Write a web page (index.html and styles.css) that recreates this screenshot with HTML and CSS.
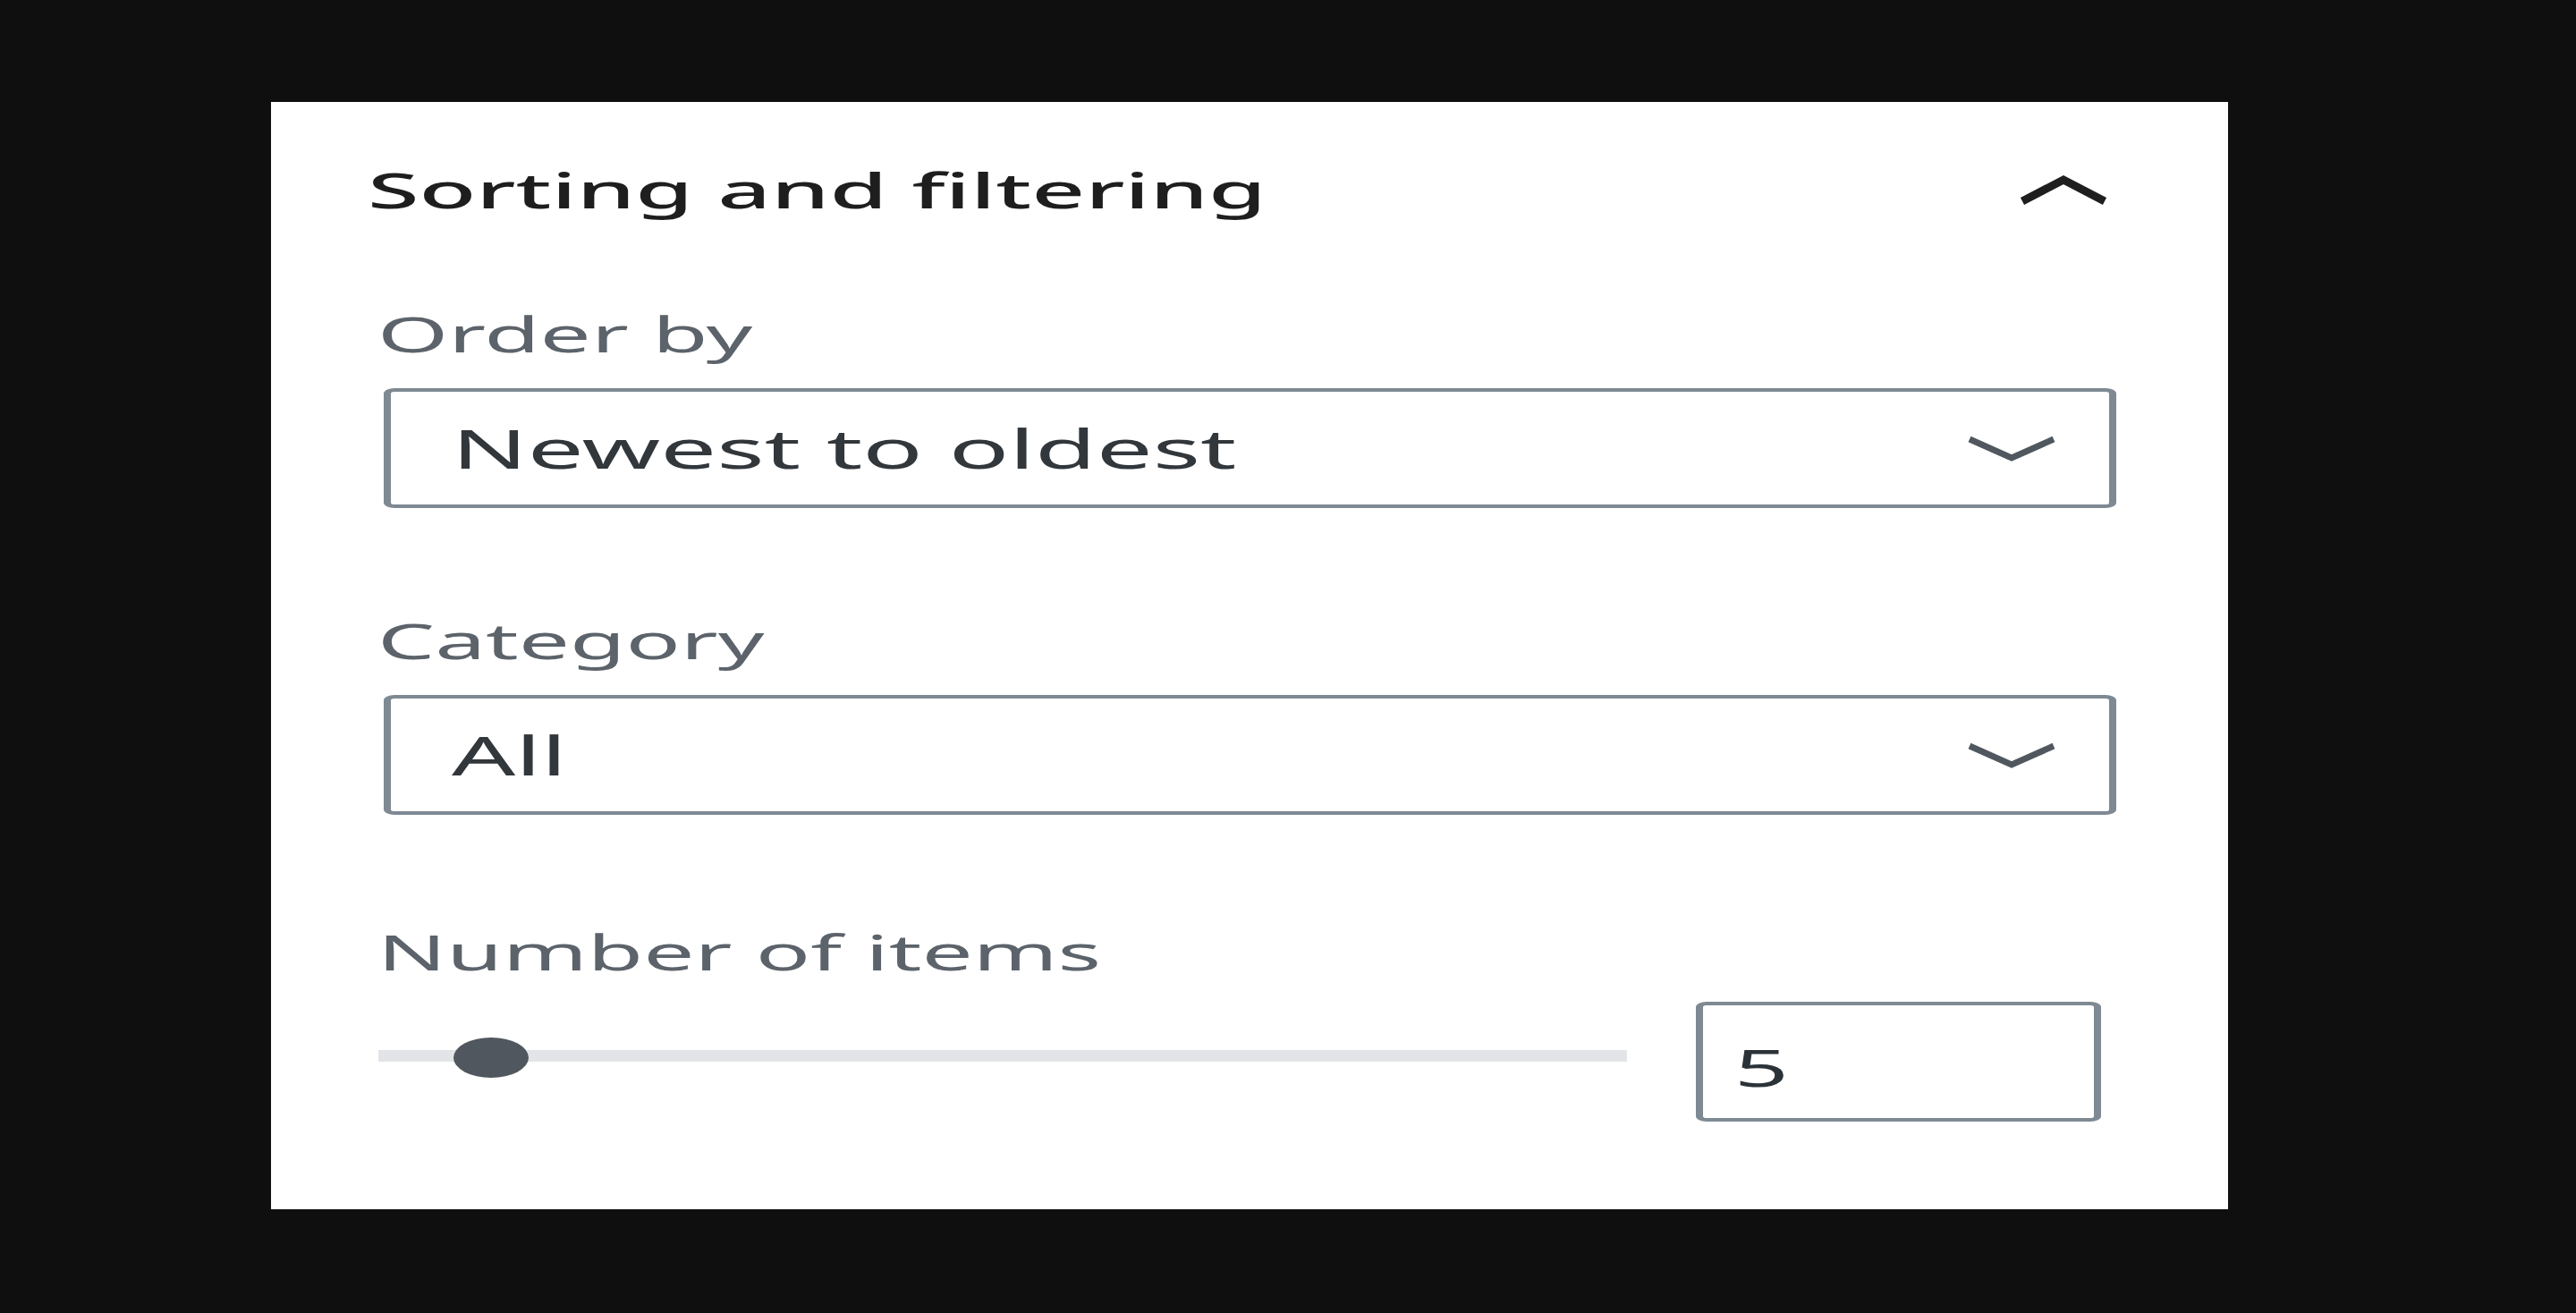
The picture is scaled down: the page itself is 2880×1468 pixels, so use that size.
FILE: index.html
```html
<!DOCTYPE html>
<html lang="en">
<head>
<meta charset="utf-8">
<title>Sorting and filtering</title>
<link rel="stylesheet" href="styles.css">
</head>
<body>
<section class="panel">
  <div class="panel-header">
    <h2 class="panel-title"><span class="stretch">Sorting and filtering</span></h2>
    <svg class="chevron-up" width="100" height="35" viewBox="0 0 100 35" aria-hidden="true">
      <polyline points="4,30 50,6 96,30" fill="none" stroke="#1e1e1e" stroke-width="9" stroke-linejoin="miter"/>
    </svg>
  </div>

  <div class="field field-first">
    <label class="field-label"><span class="stretch stretch-label">Order by</span></label>
    <div class="select">
      <span class="select-value"><span class="stretch stretch-value">Newest to oldest</span></span>
      <svg class="chevron-down" width="100" height="31" viewBox="0 0 100 31" aria-hidden="true">
        <polyline points="3,5 50,26 97,5" fill="none" stroke="#50575e" stroke-width="7"/>
      </svg>
    </div>
  </div>

  <div class="field">
    <label class="field-label"><span class="stretch stretch-label">Category</span></label>
    <div class="select">
      <span class="select-value"><span class="stretch stretch-value">All</span></span>
      <svg class="chevron-down" width="100" height="31" viewBox="0 0 100 31" aria-hidden="true">
        <polyline points="3,5 50,26 97,5" fill="none" stroke="#50575e" stroke-width="7"/>
      </svg>
    </div>
  </div>

  <div class="field field-last">
    <label class="field-label"><span class="stretch stretch-label">Number of items</span></label>
    <div class="range-row">
      <div class="slider">
        <div class="slider-track"></div>
        <div class="slider-thumb" style="left: 84px"></div>
      </div>
      <div class="number-input"><span class="stretch">5</span></div>
    </div>
  </div>
</section>
</body>
</html>
```

FILE: styles.css
```css
html, body {
  margin: 0;
  padding: 0;
}

body {
  background: #0f0f0f;
  width: 2880px;
  height: 1468px;
  overflow: hidden;
  font-family: "Noto Sans", "Open Sans", sans-serif;
}

.panel {
  box-sizing: border-box;
  margin: 114px 0 0 303px;
  width: 2188px;
  height: 1238px;
  background: #ffffff;
  padding: 68px 125px 0 108px;
}

.stretch {
  display: inline-block;
  transform: scaleX(1.9);
  transform-origin: 0 50%;
  white-space: nowrap;
}

.stretch-label {
  transform: scaleX(1.88);
}

.stretch-value {
  transform: scaleX(1.86);
}

.panel-header {
  display: flex;
  align-items: center;
  justify-content: space-between;
  height: 60px;
}

.panel-title {
  margin: 0;
  font-size: 55px;
  line-height: 60px;
  font-weight: 500;
  color: #1e1e1e;
}

.chevron-up {
  display: block;
  margin-right: 9px;
}

.field {
  margin-top: 118px;
}

.field-first {
  margin-top: 101px;
}

.field-last {
  margin-top: 123px;
}

.field-label {
  display: block;
  margin-left: 11px;
  font-size: 54px;
  line-height: 60px;
  color: #5c636a;
}

.select {
  box-sizing: border-box;
  display: flex;
  align-items: center;
  height: 134px;
  margin: 31px 0 0 18px;
  padding: 0 59px 0 68px;
  border-style: solid;
  border-color: #7e8993;
  border-width: 4px 8px;
  border-radius: 12px / 6px;
  background: #fff;
}

.select-value {
  font-size: 60px;
  line-height: 70px;
  color: #32373c;
}

.chevron-down {
  display: block;
  margin-left: auto;
}

.range-row {
  display: flex;
  align-items: flex-start;
  margin: 26px 17px 0 12px;
}

.slider {
  position: relative;
  width: 1396px;
  height: 45px;
  margin-top: 40px;
}

.slider-track {
  margin-top: 14px;
  height: 13px;
  background: #e2e4e7;
}

.slider-thumb {
  position: absolute;
  top: 0;
  width: 84px;
  height: 45px;
  border-radius: 50%;
  background: #50575e;
}

.number-input {
  box-sizing: border-box;
  display: flex;
  align-items: center;
  margin-left: auto;
  width: 453px;
  height: 134px;
  padding: 11px 0 0 35px;
  border-style: solid;
  border-color: #7e8993;
  border-width: 4px 8px;
  border-radius: 12px / 6px;
  font-size: 56px;
  line-height: 60px;
  color: #2c3338;
}
```
